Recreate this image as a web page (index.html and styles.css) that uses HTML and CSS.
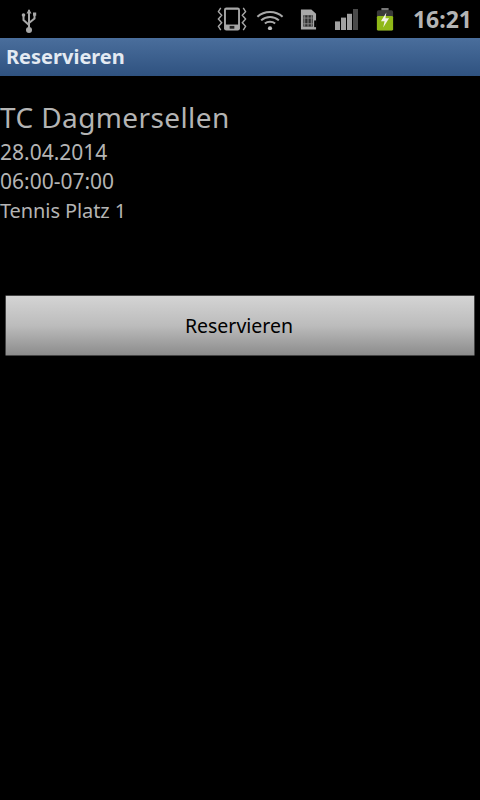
FILE: index.html
```html
<!DOCTYPE html>
<html lang="de">
<head>
<meta charset="utf-8">
<title>Reservieren</title>
<link rel="stylesheet" href="styles.css">
</head>
<body>
<header class="status">
  <svg class="usb" width="20" height="30" viewBox="0 0 20 30">
    <path d="M10 6V26M10 21L4.5 16V12M10 19L15.5 14.5V11" fill="none" stroke="#a8a8a8" stroke-width="2"/>
    <path d="M10 5L7.5 9.5H12.5Z" fill="#a8a8a8"/>
    <circle cx="4.5" cy="11" r="1.8" fill="#a8a8a8"/>
    <rect x="14" y="8.5" width="3.2" height="3.2" fill="#a8a8a8"/>
    <circle cx="10" cy="26" r="3" fill="#a8a8a8"/>
  </svg>
  <div class="status-right">
    <svg class="vib" width="30" height="24" viewBox="0 0 32 26" preserveAspectRatio="none">
      <path d="M4 1L1.5 5L5 9L1.5 13L5 17L1.5 21L4 25M28 1L30.5 5L27 9L30.5 13L27 17L30.5 21L28 25" fill="none" stroke="#a8a8a8" stroke-width="1.5"/>
      <rect x="7.5" y="0.5" width="17" height="25" rx="2.5" fill="#a8a8a8"/>
      <rect x="9.5" y="3" width="13" height="16" fill="#000"/>
      <rect x="13.5" y="20.5" width="5" height="3" fill="#222"/>
    </svg>
    <svg class="wifi" width="28" height="22" viewBox="0 0 30 24" preserveAspectRatio="none">
      <path d="M1.5 9.5C9 2.5 21 2.5 28.5 9.5M5.5 13.5C11 8.5 19 8.5 24.5 13.5M9.5 17C12.5 14.5 17.5 14.5 20.5 17" fill="none" stroke="#a8a8a8" stroke-width="2.2"/>
      <circle cx="15" cy="22" r="2.2" fill="#c0c0c0"/>
    </svg>
    <svg class="sim" width="17" height="21" viewBox="0 0 18 22" preserveAspectRatio="none">
      <path d="M1 0.5H12L17 5V21.5H1Z" fill="#a8a8a8"/>
      <rect x="3.5" y="6.5" width="10" height="12" fill="#2e2e2e"/>
      <path d="M5 6.5V18.5M8.5 6.5V18.5M12 6.5V18.5M3.5 9.5H13.5M3.5 15.5H13.5" stroke="#8a8a8a" stroke-width="1"/>
      <rect x="15" y="12" width="2" height="7" fill="#000"/>
    </svg>
    <svg class="signal" width="23" height="21" viewBox="0 0 23 22" preserveAspectRatio="none">
      <rect x="0" y="13" width="5" height="9" fill="#a0a0a0"/>
      <rect x="6" y="9" width="5" height="13" fill="#a0a0a0"/>
      <rect x="12" y="5" width="5" height="17" fill="#a0a0a0"/>
      <rect x="18" y="0" width="5" height="22" fill="#4a4a4a"/>
    </svg>
    <svg class="battery" width="18" height="23" viewBox="0 0 20 26" preserveAspectRatio="none">
      <rect x="6" y="0" width="8" height="3" fill="#777"/>
      <rect x="1" y="2.5" width="18" height="23" rx="2" fill="#3a3a3a"/>
      <rect x="1" y="9" width="18" height="16.5" rx="1.5" fill="#8fb817"/>
      <path d="M11.5 5L5.5 15H9.5L8 22L14.5 11.5H10.5Z" fill="#f2f2e6"/>
    </svg>
    <span class="clock">16:21</span>
  </div>
</header>
<div class="titlebar">Reservieren</div>
<main class="content">
  <h1 class="club">TC Dagmersellen</h1>
  <p class="info">28.04.2014</p>
  <p class="info">06:00-07:00</p>
  <p class="info info-place">Tennis Platz 1</p>
  <button class="action" type="button">Reservieren</button>
</main>
</body>
</html>
```

FILE: styles.css
```css
* { box-sizing: border-box; }
html, body { margin: 0; height: 100%; }
body {
  width: 480px;
  height: 800px;
  overflow: hidden;
  background: #000;
  font-family: "Noto Sans", "Open Sans", sans-serif;
}
.status {
  height: 38px;
  display: flex;
  align-items: center;
  justify-content: space-between;
  padding: 0 8px 0 19px;
  background: #000;
}
.status-right { display: flex; align-items: center; }
.status svg { display: block; flex: none; }
.vib { margin-right: 9px; }
.wifi { margin-right: 16px; }
.sim { margin-right: 18px; }
.signal { margin-right: 18px; }
.battery { margin-right: 19px; }
.clock {
  font-size: 23px;
  font-weight: 700;
  color: #b4b4b4;
  line-height: 38px;
}
.titlebar {
  height: 38px;
  padding: 0 0 2px 6px;
  display: flex;
  align-items: center;
  font-size: 20px;
  font-weight: 700;
  color: #e4eaf2;
  background: linear-gradient(#4a6e9c, #2f5280);
}
.content { padding-top: 23px; }
.club {
  margin: 0 0 3px;
  font-size: 28px;
  font-weight: 400;
  line-height: 36px;
  letter-spacing: 0.4px;
  color: #b4b4b4;
}
.info {
  margin: 0;
  font-size: 21px;
  line-height: 29px;
  color: #b4b4b4;
}
.info-place {
  font-size: 20px;
  letter-spacing: -0.1px;
}
.action {
  display: block;
  width: 470px;
  height: 61px;
  margin: 70px 0 0 5px;
  padding: 0 2px 0 0;
  border: 1px solid #444;
  border-radius: 1px;
  background: linear-gradient(#d4d4d4, #bcbcbc 50%, #8c8c8c);
  font: 400 19.5px "Noto Sans", "Open Sans", sans-serif;
  color: #000;
}
```
